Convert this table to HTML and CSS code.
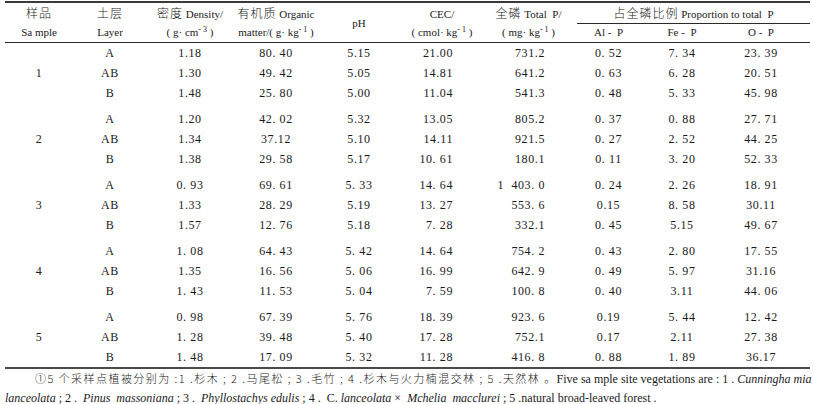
FILE: index.html
```html
<!DOCTYPE html>
<html lang="zh">
<head>
<meta charset="utf-8">
<title>Soil phosphorus fractions</title>
<link rel="stylesheet" href="styles.css">
</head>
<body>
<table class="tbl">
  <colgroup>
    <col class="c1"><col class="c2"><col class="c3"><col class="c4"><col class="c5">
    <col class="c6"><col class="c7"><col class="c8"><col class="c9"><col class="c10">
  </colgroup>
  <thead>
    <tr class="h1">
      <th rowspan="2"><span class="zh">样品</span><br>Sa mple</th>
      <th rowspan="2"><span class="zh">土层</span><br>Layer</th>
      <th rowspan="2"><span class="zh">密度</span> Density/<br>( g· cm<sup>- 3</sup> )</th>
      <th rowspan="2"><span class="zh">有机质</span> Organic<br>matter/( g· kg<sup>- 1</sup> )</th>
      <th rowspan="2">pH</th>
      <th rowspan="2" class="hcec">CEC/<br>( cmol· kg<sup>- 1</sup> )</th>
      <th rowspan="2" class="htp"><span class="zh">全磷</span> Total &nbsp;P/<br>( mg· kg<sup>- 1</sup> )</th>
      <th colspan="3" class="span"><div class="spanline"><span class="zh">占全磷比例</span> Proportion to total &nbsp;P</div></th>
    </tr>
    <tr class="h2">
      <th>Al - &nbsp;P</th>
      <th>Fe - &nbsp;P</th>
      <th class="last">O - &nbsp;P</th>
    </tr>
  </thead>
  <tbody>
    <tr><td></td><td>A</td><td>1.18</td><td>80. 40</td><td>5.15</td><td class="cec">21.00</td><td class="tp">731.2</td><td>0. 52</td><td>7. 34</td><td class="last">23. 39</td></tr>
    <tr><td>1</td><td>AB</td><td>1.30</td><td>49. 42</td><td>5.05</td><td class="cec">14.81</td><td class="tp">641.2</td><td>0. 63</td><td>6. 28</td><td class="last">20. 51</td></tr>
    <tr class="gend"><td></td><td>B</td><td>1.48</td><td>25. 80</td><td>5.00</td><td class="cec">11.04</td><td class="tp">541.3</td><td>0. 48</td><td>5. 33</td><td class="last">45. 98</td></tr>

    <tr><td></td><td>A</td><td>1.20</td><td>42. 02</td><td>5.32</td><td class="cec">13.05</td><td class="tp">805.2</td><td>0. 37</td><td>0. 88</td><td class="last">27. 71</td></tr>
    <tr><td>2</td><td>AB</td><td>1.34</td><td>37.12</td><td>5.10</td><td class="cec">14.11</td><td class="tp">921.5</td><td>0. 27</td><td>2. 52</td><td class="last">44. 25</td></tr>
    <tr class="gend"><td></td><td>B</td><td>1.38</td><td>29. 58</td><td>5.17</td><td class="cec">10. 61</td><td class="tp">180.1</td><td>0. 11</td><td>3. 20</td><td class="last">52. 33</td></tr>

    <tr><td></td><td>A</td><td>0. 93</td><td>69. 61</td><td>5. 33</td><td class="cec">14. 64</td><td class="tp">1 &nbsp;403. 0</td><td>0. 24</td><td>2. 26</td><td class="last">18. 91</td></tr>
    <tr><td>3</td><td>AB</td><td>1.33</td><td>28. 29</td><td>5.19</td><td class="cec">13. 27</td><td class="tp">553. 6</td><td>0.15</td><td>8. 58</td><td class="last">30.11</td></tr>
    <tr class="gend"><td></td><td>B</td><td>1.57</td><td>12. 76</td><td>5.18</td><td class="cec">7. 28</td><td class="tp">332.1</td><td>0. 45</td><td>5.15</td><td class="last">49. 67</td></tr>

    <tr><td></td><td>A</td><td>1. 08</td><td>64. 43</td><td>5. 42</td><td class="cec">14. 64</td><td class="tp">754. 2</td><td>0. 43</td><td>2. 80</td><td class="last">17. 55</td></tr>
    <tr><td>4</td><td>AB</td><td>1.35</td><td>16. 56</td><td>5. 06</td><td class="cec">16. 99</td><td class="tp">642. 9</td><td>0. 49</td><td>5. 97</td><td class="last">31.16</td></tr>
    <tr class="gend"><td></td><td>B</td><td>1. 43</td><td>11. 53</td><td>5. 04</td><td class="cec">7. 59</td><td class="tp">100. 8</td><td>0. 40</td><td>3.11</td><td class="last">44. 06</td></tr>

    <tr><td></td><td>A</td><td>0. 98</td><td>67. 39</td><td>5. 76</td><td class="cec">18. 39</td><td class="tp">923. 6</td><td>0.19</td><td>5. 44</td><td class="last">12. 42</td></tr>
    <tr><td>5</td><td>AB</td><td>1. 28</td><td>39. 48</td><td>5. 40</td><td class="cec">17. 28</td><td class="tp">752.1</td><td>0.17</td><td>2.11</td><td class="last">27. 38</td></tr>
    <tr><td></td><td>B</td><td>1. 48</td><td>17. 09</td><td>5. 32</td><td class="cec">11. 28</td><td class="tp">416. 8</td><td>0. 88</td><td>1. 89</td><td class="last">36.17</td></tr>
  </tbody>
</table>
<p class="note"><span class="zh">①5 个采样点植被分别为 :1 .杉木 ; 2 .马尾松 ; 3 .毛竹 ; 4 .杉木与火力楠混交林 ; 5 .天然林 。</span>Five sa mple site vegetations are : 1 . <i>Cunningha mia</i><br><i>lanceolata</i> ; 2 . &nbsp;<i>Pinus &nbsp;massoniana</i> ; 3 . &nbsp;<i>Phyllostachys edulis</i> ; 4 . &nbsp;C. <i>lanceolata</i> × &nbsp;<i>Mchelia &nbsp;macclurei</i> ; 5 .natural broad-leaved forest .</p>
</body>
</html>
```

FILE: styles.css
```css
html, body {
  margin: 0;
  padding: 0;
  background: #ffffff;
}
body {
  padding: 1px 0 0 5px;
  font-family: "Liberation Serif", "Times New Roman", serif;
  color: #1a1a1a;
}
.zh {
  font-family: "Noto Sans CJK SC", sans-serif;
  font-weight: 300;
}
.tbl {
  border-collapse: collapse;
  table-layout: fixed;
  width: 805px;
  border-top: 2px solid #3a3a3a;
  border-bottom: 2px solid #4a4a4a;
}
.c1 { width: 68px; }
.c2 { width: 74px; }
.c3 { width: 86px; }
.c4 { width: 86px; }
.c5 { width: 80px; }
.c6 { width: 86px; }
.c7 { width: 87px; }
.c8 { width: 73px; }
.c9 { width: 74px; }
.c10 { width: 91px; }

thead th {
  font-weight: normal;
  font-size: 11px;
  line-height: 18px;
  padding: 0;
  text-align: center;
  vertical-align: middle;
  white-space: nowrap;
}
thead th .zh {
  font-size: 12px;
  letter-spacing: 1px;
}
thead tr.h1 th[rowspan] {
  border-bottom: 1px solid #2a2a2a;
  padding: 1px 0 0;
}
thead tr.h1 { height: 20px; }
thead tr.h2 { height: 18px; }
thead tr.h2 th {
  border-bottom: 1px solid #2a2a2a;
  line-height: 17px;
}
sup {
  font-size: 8px;
  line-height: 0;
  vertical-align: 4px;
}
th.span {
  padding: 0;
  vertical-align: top;
}
.spanline {
  margin-left: 5px;
  border-bottom: 1px solid #2a2a2a;
  line-height: 18px;
  padding-top: 1px;
}
th.hcec { padding-right: 8px; }
th.htp { padding-right: 0; }
th.last, td.last { padding-right: 7px; }

tbody td {
  font-size: 12px;
  letter-spacing: 0.6px;
  height: 20px;
  padding: 0;
  line-height: 20px;
  text-align: center;
  white-space: nowrap;
}
tbody tr.gend td {
  padding-bottom: 6px;
}
tbody td.cec {
  text-align: right;
  padding-right: 32px;
}
tbody td.tp {
  text-align: right;
  padding-right: 27px;
}
.note {
  margin: 0;
  font-size: 12px;
  line-height: 19px;
  white-space: nowrap;
  text-indent: 30px;
}
.note .zh {
  font-size: 11px;
  letter-spacing: 1.45px;
}
```
